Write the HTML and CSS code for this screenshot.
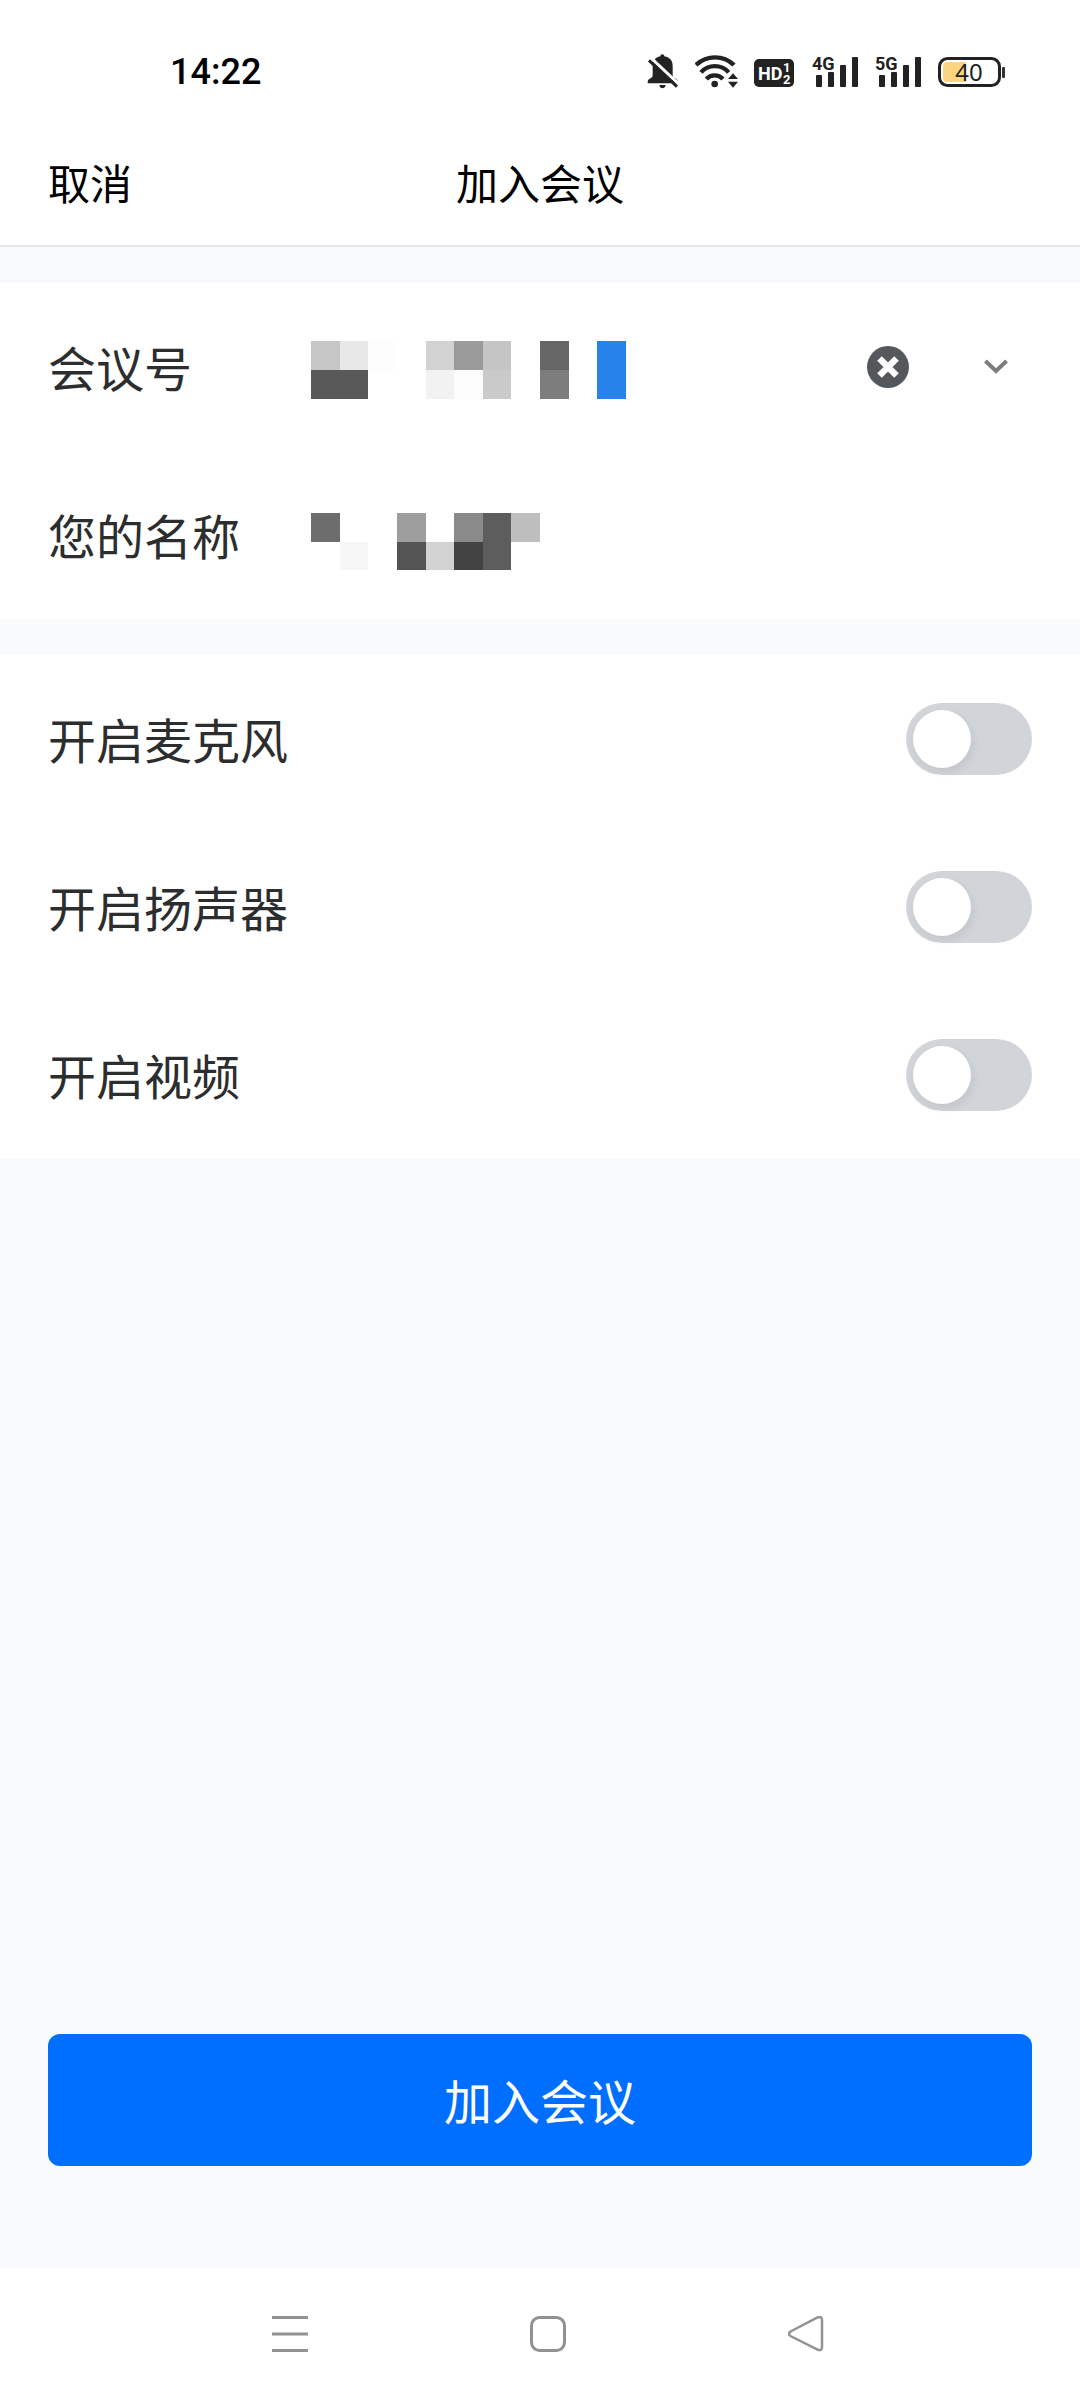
FILE: index.html
```html
<!DOCTYPE html>
<html lang="zh-CN">
<head>
<meta charset="utf-8">
<meta name="viewport" content="width=device-width, initial-scale=1">
<title>加入会议</title>
<link rel="stylesheet" href="styles.css">
</head>
<body>
<div class="screen">
  <div class="status-bar">
    <time class="clock">14:22</time>
    <div class="status-icons">
      <svg class="bell" width="32" height="36" viewBox="82 40 96 108" aria-hidden="true">
        <path d="M128 44C132 44 134 47 134 50C151 53 159 64 159 78V106C159 112 162 114 168 117C173 119 174 123 174 131H84C84 123 85 119 90 117C96 114 99 112 99 106V78C99 64 106 53 122 50C122 47 124 44 128 44Z" fill="#222"/>
        <path d="M119 136H138Q136 146 128 146Q121 146 119 136Z" fill="#222"/>
        <path d="M93 54L182 138" stroke="#fff" stroke-width="9"/>
        <path d="M88 62L172 141" stroke="#222" stroke-width="9"/>
      </svg>
      <svg class="wifi" width="43" height="36" viewBox="228 40 129 108" aria-hidden="true">
        <g fill="none" stroke="#222" stroke-width="13">
          <path d="M231 76A82 82 0 0 1 345 76"/>
          <path d="M246 98A56 56 0 0 1 329 98"/>
          <path d="M262 118A34 34 0 0 1 312 118"/>
        </g>
        <circle cx="287" cy="133" r="10" fill="#222"/>
        <path d="M342 101L327 118H357ZM327 126H357L342 144Z" fill="#222"/>
      </svg>
      <svg class="hd" width="42" height="36" viewBox="0 0 42 36" aria-hidden="true">
        <rect y="6" width="40" height="28" rx="5" fill="#222"/>
        <text x="4" y="27" class="hd-text">HD</text>
        <text x="29" y="19" class="hd-digit">1</text>
        <text x="29" y="31" class="hd-digit">2</text>
      </svg>
      <svg class="signal" width="47" height="36" viewBox="0 0 47 36" aria-hidden="true">
        <text x="0" y="17" class="net-text">4G</text>
        <g fill="#222"><rect x="4" y="22" width="6" height="12" rx="1"/><rect x="16" y="19" width="6" height="15" rx="1"/><rect x="28" y="12" width="6" height="22" rx="1"/><rect x="40" y="4" width="6" height="30" rx="1"/></g>
      </svg>
      <svg class="signal" width="47" height="36" viewBox="0 0 47 36" aria-hidden="true">
        <text x="0" y="17" class="net-text">5G</text>
        <g fill="#222"><rect x="4" y="22" width="6" height="12" rx="1"/><rect x="16" y="19" width="6" height="15" rx="1"/><rect x="28" y="12" width="6" height="22" rx="1"/><rect x="40" y="4" width="6" height="30" rx="1"/></g>
      </svg>
      <svg class="battery" width="68" height="36" viewBox="0 0 68 36" aria-hidden="true">
        <rect x="1.5" y="5.5" width="60" height="27" rx="8" fill="none" stroke="#222" stroke-width="3"/>
        <path d="M9 9H28V29H9Q5 29 5 25V13Q5 9 9 9Z" fill="#fbd57f"/>
        <rect x="64" y="14" width="3" height="11" rx="1" fill="#333"/>
        <text x="31" y="28" text-anchor="middle" class="battery-text">40</text>
      </svg>
    </div>
  </div>

  <header class="title-bar">
    <button type="button" class="cancel">取消</button>
    <h1 class="title">加入会议</h1>
  </header>

  <main class="content">
    <form class="form" id="join">
      <section class="group">
        <div class="row">
          <label class="label" for="meeting-id">会议号</label>
          <div class="field">
            <input class="input" id="meeting-id" type="text">
            <svg class="mask" width="316" height="168" viewBox="0 0 316 168" aria-hidden="true" shape-rendering="crispEdges">
              <rect x="0" y="58" width="29" height="29" fill="#c6c6c6"/><rect x="29" y="58" width="28" height="29" fill="#e8e8e8"/>
              <rect x="0" y="87" width="57" height="29" fill="#595959"/>
              <rect x="57" y="58" width="29" height="29" fill="#fdfdfd"/>
              <rect x="115" y="58" width="28" height="29" fill="#d2d2d2"/><rect x="143" y="58" width="29" height="29" fill="#9b9b9b"/><rect x="172" y="58" width="28" height="29" fill="#c5c5c5"/>
              <rect x="115" y="87" width="28" height="29" fill="#f2f2f2"/><rect x="143" y="87" width="29" height="29" fill="#fcfcfc"/><rect x="172" y="87" width="28" height="29" fill="#cacaca"/>
              <rect x="229" y="58" width="29" height="29" fill="#666"/><rect x="229" y="87" width="29" height="29" fill="#7d7d7d"/>
              <rect x="286" y="58" width="29" height="58" fill="#2882eb"/>
            </svg>
          </div>
          <button type="button" class="icon-button clear" aria-label="清除">
            <svg width="42" height="42" viewBox="0 0 42 42"><circle cx="21" cy="21" r="21" fill="#55585a"/><path d="M12.500 12.500L29.500 29.500M29.500 12.500L12.500 29.500" stroke="#fff" stroke-width="6.500"/></svg>
          </button>
          <button type="button" class="icon-button history" aria-label="历史会议">
            <svg width="24" height="16" viewBox="0 0 24 16"><path d="M1.500 2L12 12L22.500 2" fill="none" stroke="#7b7d7f" stroke-width="4"/></svg>
          </button>
        </div>
        <div class="row">
          <label class="label" for="user-name">您的名称</label>
          <div class="field">
            <input class="input" id="user-name" type="text">
            <svg class="mask" width="316" height="168" viewBox="0 0 316 168" aria-hidden="true" shape-rendering="crispEdges">
              <rect x="0" y="62" width="29" height="29" fill="#6d6d6d"/><rect x="29" y="91" width="28" height="28" fill="#f6f6f6"/>
              <rect x="86" y="62" width="29" height="29" fill="#9e9e9e"/><rect x="86" y="91" width="29" height="28" fill="#545454"/>
              <rect x="115" y="91" width="28" height="28" fill="#d2d2d2"/>
              <rect x="143" y="62" width="29" height="29" fill="#8a8a8a"/><rect x="143" y="91" width="29" height="28" fill="#434343"/>
              <rect x="172" y="62" width="28" height="57" fill="#5d5d5d"/>
              <rect x="200" y="62" width="29" height="29" fill="#bebebe"/>
            </svg>
          </div>
        </div>
      </section>

      <section class="group">
        <div class="row">
          <label class="label" for="mic">开启麦克风</label>
          <input class="switch" id="mic" type="checkbox" role="switch">
        </div>
        <div class="row">
          <label class="label" for="speaker">开启扬声器</label>
          <input class="switch" id="speaker" type="checkbox" role="switch">
        </div>
        <div class="row">
          <label class="label" for="video">开启视频</label>
          <input class="switch" id="video" type="checkbox" role="switch">
        </div>
      </section>
    </form>
    <button type="submit" form="join" class="join">加入会议</button>
  </main>

  <nav class="system-nav" aria-label="系统导航">
    <button type="button" class="icon-button" aria-label="最近任务">
      <svg width="36" height="36" viewBox="0 0 36 36"><path d="M0 1.500H36M0 18H36M0 34.500H36" stroke="#929292" stroke-width="3"/></svg>
    </button>
    <button type="button" class="icon-button" aria-label="主屏幕">
      <svg width="36" height="36" viewBox="0 0 36 36"><rect x="1.500" y="1.500" width="33" height="33" rx="8" fill="none" stroke="#929292" stroke-width="3"/></svg>
    </button>
    <button type="button" class="icon-button" aria-label="返回">
      <svg width="36" height="36" viewBox="0 0 36 36"><path d="M2.500 15.500L29.500 1.500Q34 0 34 4V31Q34 35.500 29.500 33.500L2.500 20Q-0.500 18 2.500 15.500Z" fill="none" stroke="#929292" stroke-width="2.500"/></svg>
    </button>
  </nav>
</div>
</body>
</html>
```
FILE: styles.css
```css
* {
  box-sizing: border-box;
}

body {
  margin: 0;
  background: #fff;
  color: #000;
  font-family: "Noto Sans CJK SC", "Noto Sans", sans-serif;
}

button {
  padding: 0;
  border: 0;
  background: none;
  color: inherit;
  font: inherit;
  cursor: pointer;
}

svg {
  display: block;
  flex: none;
}

.screen {
  display: flex;
  flex-direction: column;
  min-height: 100vh;
}

/* Status bar */
.status-bar {
  display: flex;
  align-items: center;
  justify-content: space-between;
  height: 120px;
  padding: 24px 74px 0 170px;
}

.clock {
  font-family: Roboto, "Noto Sans", sans-serif;
  font-size: 36px;
  font-weight: 500;
  line-height: 48px;
}

.status-icons {
  display: flex;
  align-items: center;
  gap: 16px;
  height: 48px;
  padding-bottom: 2px;
}

.hd-text,
.hd-digit,
.net-text {
  font-family: Roboto, sans-serif;
  font-weight: 700;
}

.hd-text {
  fill: #fff;
  font-size: 18px;
}

.hd-digit {
  fill: #fff;
  font-size: 13px;
}

.net-text {
  fill: #222;
  font-size: 18px;
}

.battery-text {
  fill: #222;
  font-family: "Noto Sans", sans-serif;
  font-size: 24px;
}

/* Title bar */
.title-bar {
  display: grid;
  grid-template-columns: 1fr auto 1fr;
  align-items: center;
  height: 127px;
  padding: 0 48px 2px;
  border-bottom: 2px solid #e4e5e6;
  font-size: 42px;
  line-height: 60px;
}

.cancel {
  justify-self: start;
}

.title {
  margin: 0;
  font-size: 42px;
  font-weight: 400;
}

/* Form */
.content {
  display: flex;
  flex: 1;
  flex-direction: column;
  justify-content: space-between;
  padding: 36px 0 102px;
  background: #f9fafc;
}

.form {
  display: flex;
  flex-direction: column;
  gap: 36px;
}

.group {
  background: #fff;
}

.row {
  display: flex;
  align-items: center;
  justify-content: space-between;
  height: 168px;
  padding: 0 48px;
}

.label {
  flex: none;
  min-width: 263px;
  padding-bottom: 2px;
  color: #2b2d2e;
  font-size: 48px;
  line-height: 72px;
}

.field {
  display: grid;
  flex: 1;
  align-items: center;
}

.input,
.mask {
  grid-area: 1 / 1;
}

.input {
  width: 100%;
  height: 96px;
  padding: 0;
  border: 0;
  outline: 0;
  background: none;
  font: inherit;
  font-size: 48px;
}

.mask {
  pointer-events: none;
}

.icon-button {
  display: flex;
  flex: none;
  align-items: center;
  justify-content: center;
}

.clear {
  margin-right: 75px;
}

.history {
  margin-right: 24px;
}

.switch {
  flex: none;
  width: 126px;
  height: 72px;
  margin: 0;
  padding: 7px;
  border-radius: 36px;
  background: #d1d5d9;
  appearance: none;
  cursor: pointer;
}

.switch::before {
  display: block;
  width: 58px;
  height: 58px;
  border-radius: 50%;
  background: #fff;
  box-shadow: 2px 4px 8px rgb(0 0 0 / 8%);
  content: "";
}

.switch:checked {
  background: #006fff;
}

.switch:checked::before {
  margin-left: auto;
}

.join {
  height: 132px;
  margin: 0 48px;
  padding-bottom: 2px;
  border-radius: 12px;
  background: #006fff;
  color: #fff;
  font-size: 48px;
  line-height: 72px;
}

/* System navigation */
.system-nav {
  display: flex;
  align-items: center;
  justify-content: center;
  gap: 222px;
  height: 132px;
  padding-left: 16px;
}
```
